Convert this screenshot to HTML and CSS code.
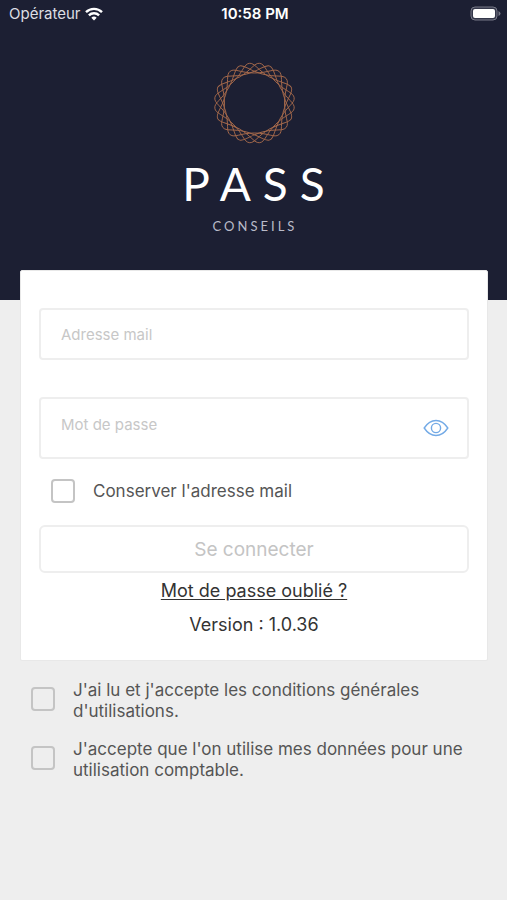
FILE: index.html
```html
<!DOCTYPE html>
<html lang="fr">
<head>
  <meta charset="UTF-8">
  <meta name="viewport" content="width=device-width, initial-scale=1.0">
  <title>Pass Conseils</title>
  <link rel="stylesheet" href="styles.css">
</head>
<body>
  <header class="header">
    <div class="status">
      <div class="carrier">
        <span>Opérateur</span>
        <svg width="18" height="14" viewBox="0 0 18 14" fill="none" stroke="#fff" stroke-width="2.4">
          <path d="M1 5.2a11.4 11.4 0 0 1 16 0"/>
          <path d="M3.9 8.3a7.2 7.2 0 0 1 10.2 0"/>
          <path d="M9 13.6L6.3 10.8a3.8 3.8 0 0 1 5.400 0z" fill="#fff" stroke="none"/>
        </svg>
      </div>
      <strong class="clock">10:58 PM</strong>
      <svg class="battery" width="31" height="15" viewBox="0 0 31 15">
        <rect x="1" y="1" width="26" height="13" rx="4" fill="#34374a" stroke="#777987"/>
        <rect x="3" y="3" width="22" height="9" rx="2" fill="#fff"/>
        <path d="M28.5 5q2 1 2 2.500t-2 2.500z" fill="#777987"/>
      </svg>
    </div>
    <div class="logo">
      <svg width="84" height="84" viewBox="-42.500 -42 84 84" fill="none" stroke="#a5694b" stroke-width="0.9">
        <defs>
          <path id="lobe" d="M-18.300-23.800C-7.200-32.300-5.500-40 0-40S7.200-32.300 18.300-23.800"/>
          <g id="quarter">
            <use href="#lobe" transform="rotate(7.500)"/>
            <use href="#lobe" transform="rotate(22.500)"/>
            <use href="#lobe" transform="rotate(37.500)"/>
            <use href="#lobe" transform="rotate(52.500)"/>
            <use href="#lobe" transform="rotate(67.500)"/>
            <use href="#lobe" transform="rotate(82.500)"/>
          </g>
        </defs>
        <use href="#quarter"/>
        <use href="#quarter" transform="rotate(90)"/>
        <use href="#quarter" transform="rotate(180)"/>
        <use href="#quarter" transform="rotate(270)"/>
      </svg>
      <div class="brand">PASS</div>
      <div class="brand-sub">CONSEILS</div>
    </div>
  </header>

  <main>
    <form class="card">
      <div class="field">
        <input type="email" placeholder="Adresse mail" aria-label="Adresse mail">
      </div>
      <div class="field field-password">
        <input type="password" placeholder="Mot de passe" aria-label="Mot de passe">
        <button type="button" class="eye" aria-label="Afficher le mot de passe">
          <svg width="26" height="18" viewBox="0 0 26 18" fill="none" stroke="#73aae6" stroke-width="1.400">
            <path d="M1.200 9C4.500 4 8.500 1.500 13 1.500S21.500 4 24.800 9C21.500 14 17.500 16.500 13 16.500S4.500 14 1.200 9z"/>
            <circle cx="13" cy="9" r="4.600"/>
          </svg>
        </button>
      </div>
      <label class="check check-mail">
        <input type="checkbox">
        <span>Conserver l'adresse mail</span>
      </label>
      <button type="submit" class="submit" disabled>Se connecter</button>
      <a class="forgot" href="#">Mot de passe oublié ?</a>
      <p class="version">Version : 1.0.36</p>
    </form>

    <div class="terms">
      <label class="check">
        <input type="checkbox">
        <span>J'ai lu et j'accepte les conditions générales d'utilisations.</span>
      </label>
      <label class="check">
        <input type="checkbox">
        <span>J'accepte que l'on utilise mes données pour une utilisation comptable.</span>
      </label>
    </div>
  </main>
</body>
</html>
```
FILE: styles.css
```css
*{box-sizing:border-box;}
body{margin:0;background:#eee;color:#333;font-family:Inter,"Liberation Sans",sans-serif;font-size:17px;line-height:21px;}
svg{display:block;}
input,button{font-family:inherit;}

.header{background:#1c1f33;color:#fff;height:300px;}
.status{display:grid;grid-template-columns:1fr auto 1fr;align-items:center;height:27px;padding:0 6px 0 9px;font-size:15px;}
.carrier{display:flex;align-items:center;gap:4px;color:#dddee3;}
.clock{font-weight:600;}
.battery{justify-self:end;}

.logo{display:flex;flex-direction:column;align-items:center;padding-top:34px;}
.brand{margin-top:15px;padding-left:12px;font-family:Lato,sans-serif;font-size:46px;line-height:48px;letter-spacing:12px;}
.brand-sub{margin-top:9px;padding-left:3px;font-family:Lato,sans-serif;font-size:13px;line-height:18px;letter-spacing:3px;color:#b9bbc8;}

.card{display:flex;flex-direction:column;margin:-30px 19px 0 20px;padding:37px 18px 25px;background:#fff;border:1px solid #e8e8e8;border-radius:2px;}
.field{display:flex;align-items:center;height:52px;padding:0 20px;border:2px solid #eee;border-radius:4px;}
.field input{flex:1;min-width:0;padding:0;border:0;outline:0;background:none;font-size:15px;color:#333;}
.field input::placeholder{color:#c7c7c7;}
.field-password{height:62px;margin-top:37px;padding-right:18px;}
.field-password input{padding-bottom:8px;}
.eye{padding:0;border:0;background:none;}

.check{display:flex;align-items:center;gap:18px;color:#555;}
.check input{appearance:none;flex:none;width:24px;height:24px;margin:0;border:2px solid #c4c4c4;border-radius:4px;}
.check-mail{margin:20px 12px 22px;}

.submit{height:48px;border:2px solid #eee;border-radius:6px;background:#fff;color:#c4c4c4;font-size:19px;}
.forgot{align-self:center;margin-top:7px;color:#333;font-size:18px;text-underline-offset:2px;}
.version{margin:13px 0 0;text-align:center;font-size:18px;}

.terms{display:flex;flex-direction:column;gap:17px;padding:19px 31px;}
.terms .check input{margin-bottom:4px;}
```
